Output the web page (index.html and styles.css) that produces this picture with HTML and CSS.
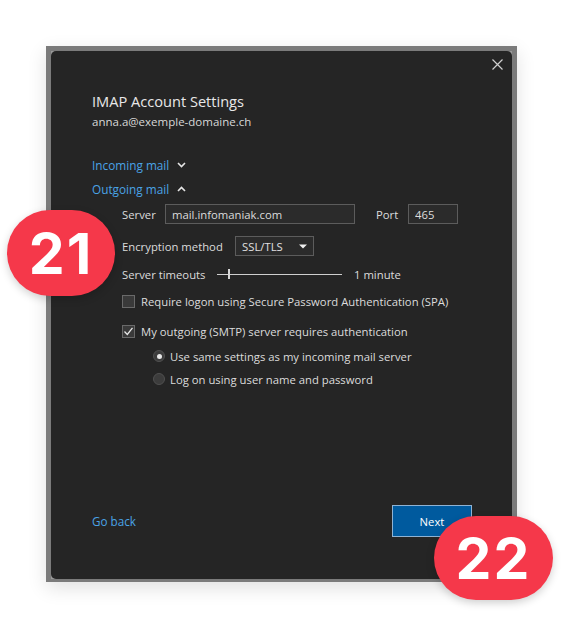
FILE: index.html
```html
<!DOCTYPE html>
<html lang="en">
<head>
    <meta charset="UTF-8">
    <meta name="viewport" content="width=device-width, initial-scale=1.0">
    <title>IMAP Account Settings</title>
    <link rel="stylesheet" href="styles.css">
</head>
<body>

<div class="stage">
    <div class="frame">
        <div class="dialog">
            <div class="dialog-top">
                <button class="close" aria-label="Close">
                    <svg width="11" height="11" viewBox="0 0 11 11"><path d="M0.5 0.5 L10.5 10.5 M10.5 0.5 L0.5 10.5" stroke="#d0d0d0" stroke-width="1.2" fill="none"/></svg>
                </button>
            </div>

            <h1 class="title">IMAP Account Settings</h1>
            <div class="email">anna.a@exemple-domaine.ch</div>

            <div class="section-link first">
                Incoming mail
                <svg class="chevron" width="9" height="6" viewBox="0 0 9 6"><path d="M1 1 L4.5 4.5 L8 1" stroke="#e6e6e6" stroke-width="1.6" fill="none"/></svg>
            </div>
            <div class="section-link">
                Outgoing mail
                <svg class="chevron" width="9" height="6" viewBox="0 0 9 6"><path d="M1 5 L4.5 1.5 L8 5" stroke="#e6e6e6" stroke-width="1.6" fill="none"/></svg>
            </div>

            <div class="form">
                <div class="row row-server">
                    <label for="server">Server</label>
                    <input type="text" id="server" class="field field-server" value="mail.infomaniak.com">
                    <label for="port" class="port-label">Port</label>
                    <input type="text" id="port" class="field field-port" value="465">
                </div>

                <div class="row row-enc">
                    <label>Encryption method</label>
                    <div class="select">
                        <span>SSL/TLS</span>
                        <svg width="8" height="5" viewBox="0 0 8 5"><path d="M0 0.5 L8 0.5 L4 4.5 Z" fill="#f0f0f0"/></svg>
                    </div>
                </div>

                <div class="row row-timeout">
                    <label>Server timeouts</label>
                    <div class="slider">
                        <div class="slider-track"></div>
                        <div class="slider-thumb"></div>
                    </div>
                    <span>1 minute</span>
                </div>

                <div class="row row-check first-check">
                    <span class="checkbox"></span>
                    <span>Require logon using Secure Password Authentication (SPA)</span>
                </div>

                <div class="row row-check second-check">
                    <span class="checkbox checked">
                        <svg width="11" height="11" viewBox="0 0 11 11"><path d="M1.5 5.5 L4.3 8.5 L9.5 1.8" stroke="#e8e8e8" stroke-width="1.3" fill="none"/></svg>
                    </span>
                    <span>My outgoing (SMTP) server requires authentication</span>
                </div>

                <div class="radios">
                    <div class="row row-radio first-radio">
                        <span class="radio selected"></span>
                        <span>Use same settings as my incoming mail server</span>
                    </div>
                    <div class="row row-radio second-radio">
                        <span class="radio"></span>
                        <span>Log on using user name and password</span>
                    </div>
                </div>
            </div>

            <div class="footer">
                <a href="#" class="back">Go back</a>
                <button class="next">Next</button>
            </div>
        </div>
    </div>

    <div class="badge badge-21">21</div>
    <div class="badge badge-22">22</div>
</div>

</body>
</html>
```

FILE: styles.css
```css
body {
    margin: 0;
    background-color: #fff;
    font-family: "Open Sans", "Noto Sans", sans-serif;
}
.stage {
    position: relative;
    width: 563px;
    height: 629px;
    padding: 46px 0 0 46px;
    box-sizing: border-box;
}
.frame {
    width: 471px;
    height: 536px;
    box-sizing: border-box;
    border: 5px solid #7b7b7b;
    border-bottom-width: 3px;
    background-color: #9a9a9a;
    box-shadow: 0 6px 18px rgba(0, 0, 0, 0.12);
}
.dialog {
    height: 100%;
    background-color: #252525;
    border-radius: 5px;
    display: flex;
    flex-direction: column;
    padding-left: 41px;
    box-sizing: border-box;
    color: #dcdcdc;
    font-size: 11.3px;
}
.dialog-top {
    display: flex;
    justify-content: flex-end;
    padding: 8px 9px 0 0;
    height: 20px;
    box-sizing: border-box;
}
.close {
    background: none;
    border: none;
    padding: 0;
    width: 11px;
    height: 11px;
    cursor: pointer;
}
.close svg {
    display: block;
}
.title {
    margin: 20px 0 0;
    font-size: 14.6px;
    font-weight: normal;
    line-height: 20px;
    color: #e8e8e8;
}
.email {
    margin-top: 2px;
    font-size: 11.5px;
    line-height: 18px;
    color: #d8d8d8;
}
.section-link {
    display: flex;
    align-items: center;
    gap: 8px;
    margin-top: 4px;
    font-size: 11.8px;
    line-height: 20px;
    color: #4aa3e6;
}
.section-link.first {
    margin-top: 24px;
}
.chevron {
    display: block;
}
.form {
    padding-left: 30px;
    margin-top: 5px;
}
.row {
    display: flex;
    align-items: center;
    height: 20px;
    white-space: nowrap;
}
.row > * {
    flex: none;
}
.row-server label {
    width: 43px;
}
.field {
    height: 20px;
    box-sizing: border-box;
    background-color: #2b2b2b;
    border: 1px solid #5c5c5c;
    color: #dcdcdc;
    font-family: inherit;
    font-size: 11.3px;
    padding: 0 6px;
    outline: none;
}
.field-server {
    width: 190px;
}
.row-server .port-label {
    margin-left: 21px;
    width: 32px;
}
.field-port {
    width: 50px;
}
.row-enc {
    margin-top: 12px;
}
.row-enc label {
    width: 113px;
}
.select {
    width: 79px;
    height: 20px;
    box-sizing: border-box;
    border: 1px solid #5c5c5c;
    background-color: #2b2b2b;
    display: flex;
    align-items: center;
    justify-content: space-between;
    padding: 0 6px 0 6px;
    color: #e0e0e0;
}
.row-timeout {
    margin-top: 8px;
}
.row-timeout label {
    width: 95px;
}
.slider {
    position: relative;
    width: 125px;
    height: 12px;
    margin-right: 12px;
}
.slider-track {
    margin-top: 5.5px;
    height: 1px;
    background-color: #cfcfcf;
}
.slider-thumb {
    position: absolute;
    left: 11px;
    top: 1px;
    width: 2px;
    height: 10px;
    background-color: #d8d8d8;
}
.row-check {
    gap: 6px;
}
.first-check {
    margin-top: 7px;
}
.second-check {
    margin-top: 10px;
}
.checkbox {
    width: 13px;
    height: 13px;
    box-sizing: border-box;
    border: 1px solid #6a6a6a;
    background-color: #3a3a3a;
    display: flex;
    align-items: center;
    justify-content: center;
}
.radios {
    padding-left: 31px;
}
.row-radio {
    gap: 5px;
}
.first-radio {
    margin-top: 5px;
}
.second-radio {
    margin-top: 3px;
}
.radio {
    width: 12px;
    height: 12px;
    box-sizing: border-box;
    border-radius: 50%;
    background-color: #3c3c3c;
    border: 1px solid #505050;
    display: flex;
    align-items: center;
    justify-content: center;
}
.radio.selected::after {
    content: "";
    width: 5px;
    height: 5px;
    border-radius: 50%;
    background-color: #e8e8e8;
}
.footer {
    margin-top: auto;
    display: flex;
    align-items: center;
    justify-content: space-between;
    padding: 0 40px 42px 0;
}
.back {
    color: #4aa3e6;
    text-decoration: none;
    font-size: 11.7px;
}
.next {
    width: 80px;
    height: 32px;
    background-color: #005a9e;
    border: 1px solid #8fb3d4;
    color: #fff;
    font-family: inherit;
    font-size: 11.3px;
    cursor: pointer;
}
.badge {
    position: absolute;
    display: flex;
    align-items: center;
    justify-content: center;
    height: 86px;
    border-radius: 44px;
    background-color: #f5384a;
    color: #fff;
    font-family: Inter, "Liberation Sans", sans-serif;
    font-weight: bold;
    font-size: 57px;
    letter-spacing: 2px;
    box-shadow: 0 3px 8px rgba(0, 0, 0, 0.18);
}
.badge-21 {
    left: 7px;
    top: 210px;
    width: 108px;
}
.badge-22 {
    left: 434px;
    top: 516px;
    width: 119px;
    height: 84px;
}
```
